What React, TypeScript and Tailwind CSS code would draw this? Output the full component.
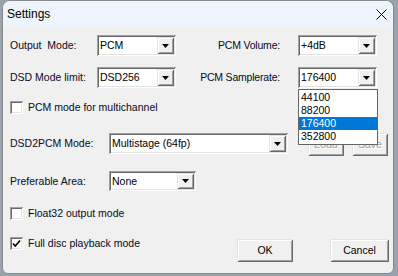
import React from "react";

const font = { fontFamily: '"Liberation Sans", Arial, sans-serif' };

const sunken =
  "bg-white shadow-[inset_1px_1px_0_#a0a0a0,inset_-1px_-1px_0_#ffffff,inset_2px_2px_0_#696969,inset_-2px_-2px_0_#e3e3e3]";
const raised =
  "bg-[#f0f0f0] shadow-[inset_1px_1px_0_#e3e3e3,inset_-1px_-1px_0_#696969,inset_2px_2px_0_#ffffff,inset_-2px_-2px_0_#a0a0a0]";

const Arrow = () => (
  <svg width="7" height="4" viewBox="0 0 7 4">
    <polygon points="0,0 7,0 3.5,4" fill="#000" />
  </svg>
);

const Combo = ({ value, w, h = 21, children }: { value: string; w: string; h?: number; children?: React.ReactNode }) => (
  <div className={`relative ${w} ${sunken} flex items-center`} style={{ height: h }}>
    <span className="pl-[3px] text-[10.5px] text-black leading-none">{value}</span>
    <div className={`absolute right-[2px] top-[2px] bottom-[2px] w-[17px] ${raised} flex items-center justify-center`}>
      <Arrow />
    </div>
    {children}
  </div>
);

const Check = ({ checked, label }: { checked?: boolean; label: string }) => (
  <div className="flex items-center h-[13px]">
    <div className={`w-[13px] h-[13px] ${sunken} flex items-center justify-center`}>
      {checked && (
        <svg width="9" height="9" viewBox="0 0 9 9">
          <path d="M1 4.5 L3.3 7 L8 1.5" stroke="#000" strokeWidth="1.7" fill="none" />
        </svg>
      )}
    </div>
    <span className="ml-[5px] text-[10.5px] text-[#0a0a1e] leading-none">{label}</span>
  </div>
);

const Button = ({ label, w, disabled }: { label: string; w: string; disabled?: boolean }) => (
  <div
    className={`${w} h-[23px] ${raised} flex items-center justify-center text-[10.5px] leading-none ${
      disabled ? "text-[#a0a0a0] [text-shadow:1px_1px_0_#ffffff]" : "text-black"
    }`}
  >
    {label}
  </div>
);

export default function App() {
  const rates = ["44100", "88200", "176400", "352800"];
  return (
    <div className="w-[398px] h-[276px] bg-[#9aa3ad] overflow-hidden text-[#0a0a1e]" style={font}>
      <div className="ml-[2px] w-[392px] h-[274px] bg-[#f0f0f0] rounded-t-[8px] rounded-b-[6px] border border-[#8a8a8a] overflow-hidden">
        <div className="h-[26px] bg-[#edf4fb] flex items-center justify-between pl-[4px] pr-[6px]">
          <span className="text-[12px] text-black">Settings</span>
          <svg width="11" height="11" viewBox="0 0 11 11">
            <path d="M0.5 0.5 L10.5 10.5 M10.5 0.5 L0.5 10.5" stroke="#000" strokeWidth="1" />
          </svg>
        </div>

        <div className="pl-[7px] pt-[8px]">
          <div className="flex items-center h-[21px]">
            <span className="w-[87px] text-[10.5px] leading-none whitespace-pre">Output  Mode:</span>
            <Combo value="PCM" w="w-[79px]" />
            <span className="w-[107px] pr-[3px] text-right text-[10.5px] leading-none tracking-[-0.2px]">PCM Volume:</span>
            <div className="ml-[15px]">
              <Combo value="+4dB" w="w-[79px]" />
            </div>
          </div>

          <div className="flex items-center h-[21px] mt-[11px]">
            <span className="w-[87px] text-[10.5px] leading-none">DSD Mode limit:</span>
            <Combo value="DSD256" w="w-[79px]" />
            <span className="w-[107px] pr-[3px] text-right text-[10.5px] leading-none tracking-[-0.2px]">PCM Samplerate:</span>
            <div className="ml-[15px] relative z-10">
              <Combo value="176400" w="w-[79px]">
                <div className="absolute left-0 top-[22px] w-[80px] bg-white border border-[#646464] py-[1px]">
                  {rates.map((r) => (
                    <div
                      key={r}
                      className={`h-[13px] pl-[2px] flex items-center text-[10.5px] leading-none ${
                        r === "176400" ? "bg-[#0078d7] text-white" : "text-black"
                      }`}
                    >
                      {r}
                    </div>
                  ))}
                </div>
              </Combo>
            </div>
          </div>

          <div className="mt-[13px]">
            <Check label="PCM mode for multichannel" />
          </div>

          <div className="flex items-start mt-[19px] h-[23px]">
            <div className="flex items-center h-[21px]">
              <span className="w-[99px] text-[10.5px] leading-none">DSD2PCM Mode:</span>
              <Combo value="Multistage (64fp)" w="w-[179px]" />
            </div>
            <div className="ml-[20px]">
              <Button label="Load" w="w-[36px]" disabled />
            </div>
            <div className="ml-[8px]">
              <Button label="Save" w="w-[36px]" disabled />
            </div>
          </div>

          <div className="flex items-center h-[20px] mt-[15px]">
            <span className="w-[99px] text-[10.5px] leading-none">Preferable Area:</span>
            <Combo value="None" w="w-[87px]" h={20} />
          </div>

          <div className="mt-[16px]">
            <Check label="Float32 output mode" />
          </div>

          <div className="flex items-start mt-[17px]">
            <div className="w-[227px]">
              <Check checked label="Full disc playback mode" />
            </div>
            <div className="mt-[2px]">
              <Button label="OK" w="w-[56px]" />
            </div>
            <div className="mt-[2px] ml-[37px]">
              <Button label="Cancel" w="w-[59px]" />
            </div>
          </div>
        </div>
      </div>
    </div>
  );
}
